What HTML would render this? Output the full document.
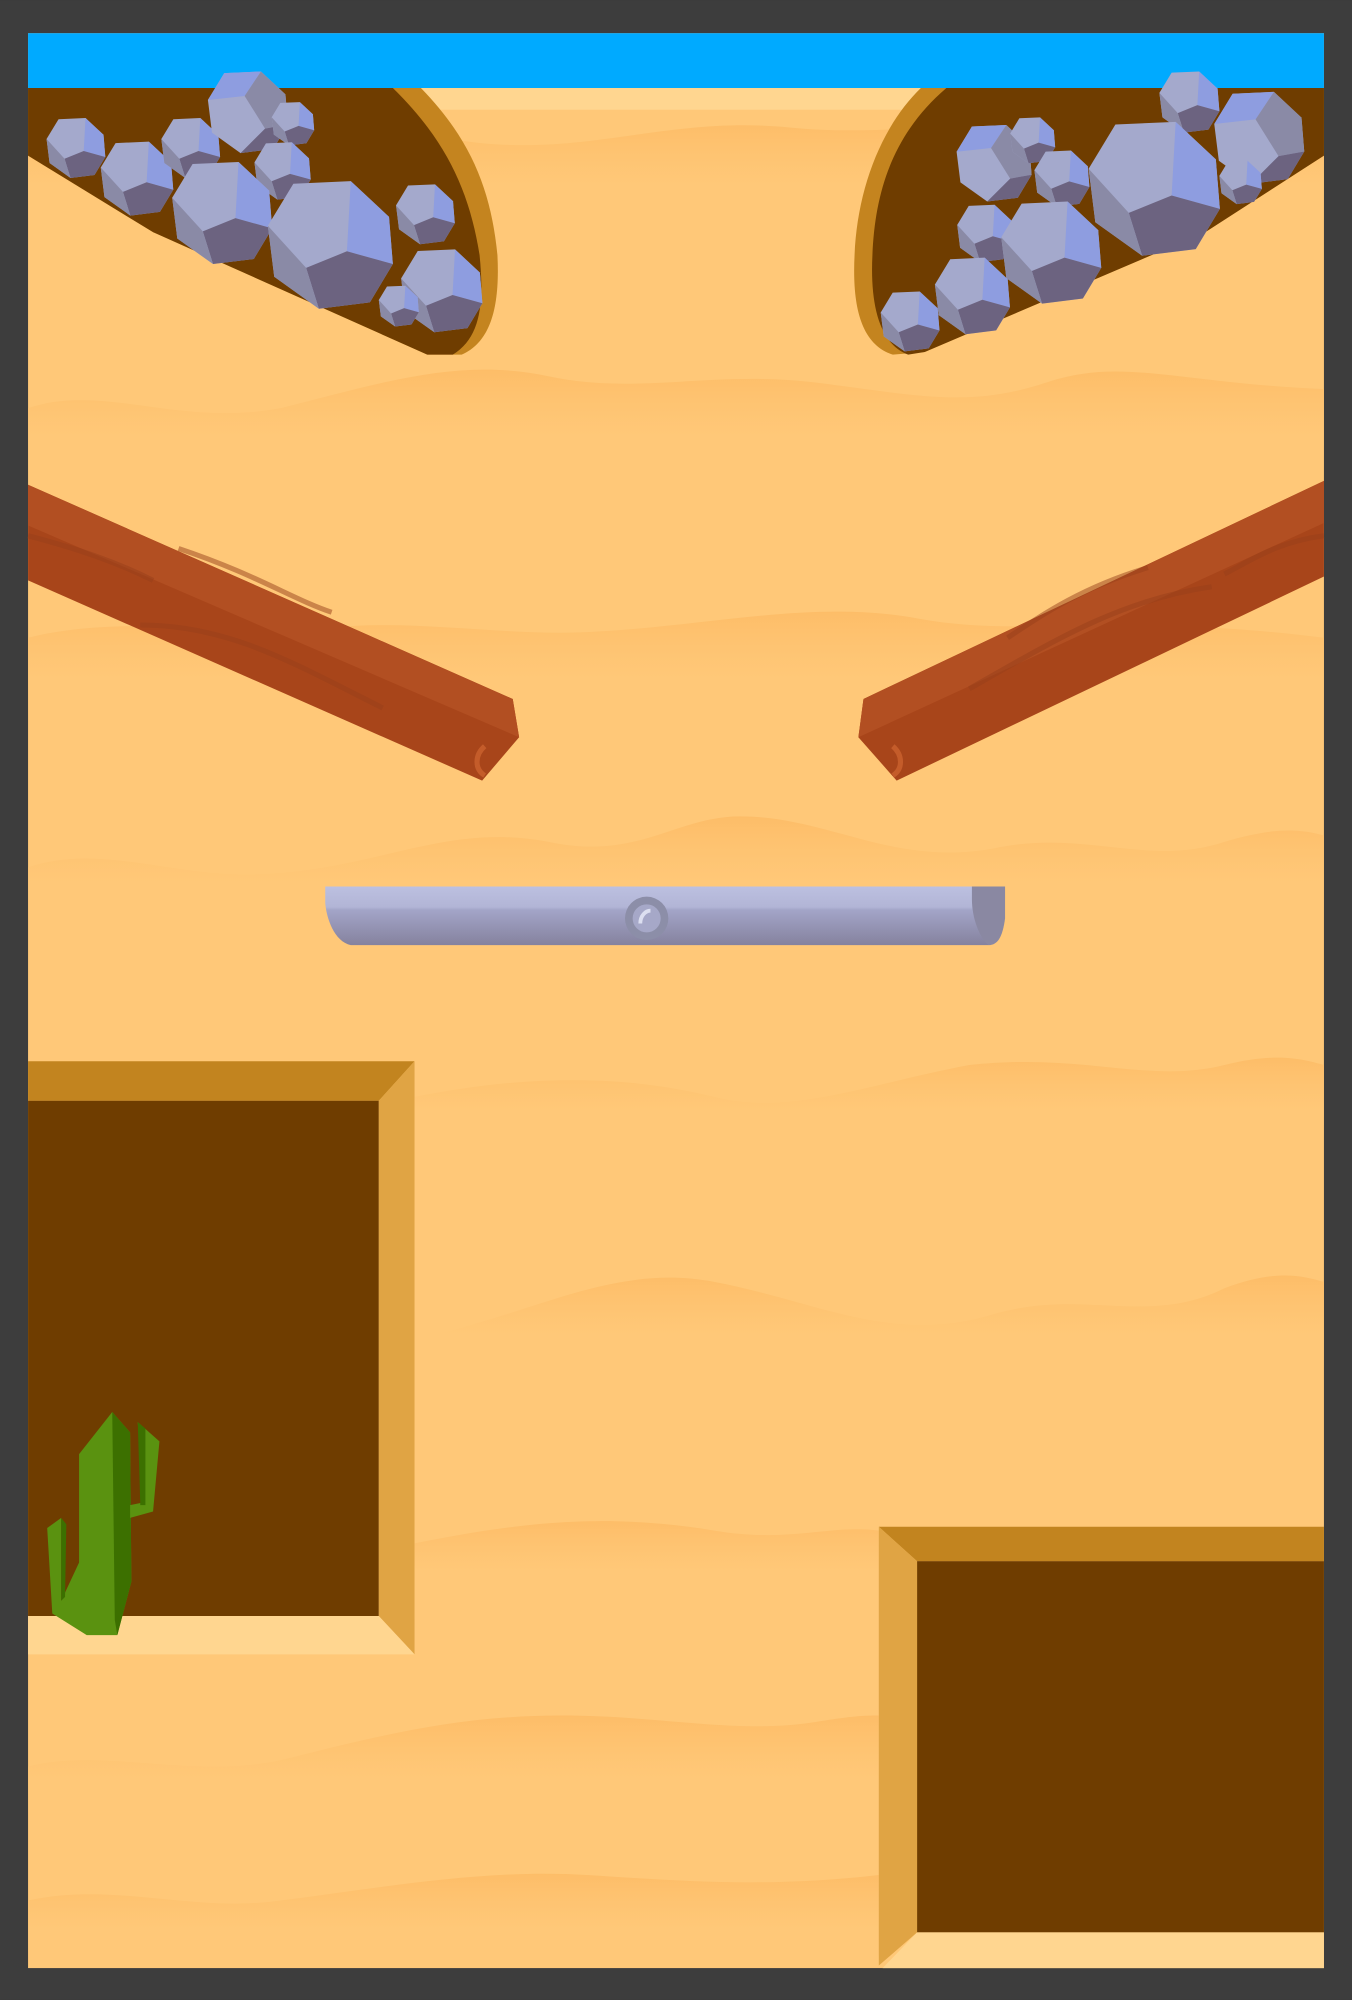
<!DOCTYPE html>
<html><head><meta charset="utf-8"><style>
html,body{margin:0;padding:0;background:#3d3d3d;}
svg{display:block;}
</style></head><body>
<svg width="1352" height="2000" viewBox="0 0 1060 1568" xmlns="http://www.w3.org/2000/svg">
<defs>
<linearGradient id="wv" x1="0" y1="0" x2="0" y2="1">
<stop offset="0" stop-color="#fdbd68"/><stop offset="0.6" stop-color="#ffc878" stop-opacity="0.6"/><stop offset="1" stop-color="#ffc878" stop-opacity="0"/>
</linearGradient>
<linearGradient id="bar" x1="0" y1="0" x2="0" y2="1">
<stop offset="0" stop-color="#bcc0e0"/><stop offset="0.35" stop-color="#b2b5d6"/><stop offset="0.4" stop-color="#a3a5c8"/><stop offset="1" stop-color="#85829e"/>
</linearGradient>
<g id="rk">
<polygon points="-30,-48 15,-50 45,-22 48,15 30,45 -10,50 -45,25 -50,-15" fill="#a4a9cc"/>
<polygon points="15,-50 45,-22 48,15 12,5" fill="#8e9de0"/>
<polygon points="48,15 30,45 -10,50 -20,18 12,5" fill="#6c6380"/>
<polygon points="-50,-15 -20,18 -10,50 -45,25" fill="#8a8aa6"/>
</g>
<g id="rk2">
<polygon points="-30,-48 15,-50 45,-22 48,15 30,45 -10,50 -45,25 -50,-15" fill="#a4a9cc"/>
<polygon points="-30,-48 15,-50 -5,-20 -50,-15" fill="#8e9de0"/>
<polygon points="15,-50 45,-22 48,15 20,20 -5,-20" fill="#8a8aa6"/>
<polygon points="48,15 30,45 -10,50 20,20" fill="#6c6380"/>
</g>
</defs>
<rect x="0" y="0" width="1060" height="1568" fill="#3d3d3d"/>
<rect x="22" y="26" width="1016" height="1517" fill="#ffc878"/>
<g>
<path d="M22,120 C120,90 260,95 360,110 C460,125 520,90 620,100 C720,110 820,80 1038,110 L1038,180 L22,180Z" fill="url(#wv)"/>
<path d="M22,320 C80,300 140,335 220,320 C300,300 360,280 430,295 C500,310 560,290 640,300 C720,310 760,320 820,300 C880,280 920,300 1038,305 L1038,380 L22,380Z" fill="url(#wv)"/>
<path d="M22,500 C100,480 200,500 260,492 C330,485 400,500 470,495 C560,490 640,470 720,485 C800,500 880,480 1038,500 L1038,570 L22,570Z" fill="url(#wv)"/>
<path d="M22,680 C80,660 140,690 210,685 C300,680 350,645 430,660 C500,675 530,640 580,640 C650,640 700,680 780,665 C850,650 900,680 960,660 C1000,648 1020,650 1038,655 L1038,730 L22,730Z" fill="url(#wv)"/>
<path d="M325,860 C400,845 480,840 560,860 C620,875 680,850 760,835 C850,825 900,850 960,835 C1000,825 1020,830 1038,835 L1038,900 L325,900Z" fill="url(#wv)"/>
<path d="M325,1050 C420,1030 480,990 560,1005 C640,1020 700,1055 780,1030 C850,1010 900,1040 960,1010 C1000,995 1020,1000 1038,1005 L1038,1080 L325,1080Z" fill="url(#wv)"/>
<path d="M325,1210 C400,1195 470,1185 560,1200 C620,1210 650,1195 689,1200 L689,1260 L325,1260Z" fill="url(#wv)"/>
<path d="M22,1385 C80,1370 150,1395 220,1380 C300,1360 360,1345 440,1345 C520,1345 580,1360 640,1350 C670,1345 680,1345 689,1345 L689,1430 L22,1430Z" fill="url(#wv)"/>
<path d="M22,1490 C90,1475 150,1500 220,1490 C300,1480 380,1465 460,1470 C540,1475 600,1480 689,1470 L689,1543 L22,1543Z" fill="url(#wv)"/>
</g>
<rect x="22" y="26" width="1016" height="43" fill="#00aaff"/>
<rect x="22" y="69" width="1016" height="17" fill="#ffd690"/>
<path d="M22,69 L330,69 C370,110 385,150 390,200 C392,240 385,268 362,278 L335,278 L120,182 L22,122Z" fill="#c4841f"/>
<path d="M22,69 L308,69 C350,110 368,150 376,200 C380,240 376,265 355,278 L335,278 L120,182 L22,122Z" fill="#6f3d00"/>
<path d="M1038,69 L722,69 C690,100 672,150 670,200 C668,240 675,270 700,278 L725,276 L945,182 L1038,122Z" fill="#c4841f"/>
<path d="M1038,69 L742,69 C700,105 686,150 684,200 C682,240 690,270 712,278 L725,276 L945,182 L1038,122Z" fill="#6f3d00"/>
<use href="#rk" transform="translate(60,116) scale(0.47)"/>
<use href="#rk" transform="translate(108,140) scale(0.58)"/>
<use href="#rk" transform="translate(150,116) scale(0.47)"/>
<use href="#rk2" transform="translate(195,88) scale(0.64)"/>
<use href="#rk" transform="translate(230,97) scale(0.34)"/>
<use href="#rk" transform="translate(222,134) scale(0.45)"/>
<use href="#rk" transform="translate(175,167) scale(0.8)"/>
<use href="#rk" transform="translate(260,192) scale(1.0)"/>
<use href="#rk" transform="translate(334,168) scale(0.47)"/>
<use href="#rk" transform="translate(347,228) scale(0.65)"/>
<use href="#rk" transform="translate(313,240) scale(0.32)"/>
<use href="#rk" transform="translate(933,80) scale(0.48)"/>
<use href="#rk2" transform="translate(988,108) scale(0.72)"/>
<use href="#rk" transform="translate(906,148) scale(1.05)"/>
<use href="#rk" transform="translate(973,143) scale(0.34)"/>
<use href="#rk2" transform="translate(780,128) scale(0.6)"/>
<use href="#rk" transform="translate(810,110) scale(0.36)"/>
<use href="#rk" transform="translate(833,140) scale(0.44)"/>
<use href="#rk" transform="translate(773,183) scale(0.45)"/>
<use href="#rk" transform="translate(825,198) scale(0.8)"/>
<use href="#rk" transform="translate(763,232) scale(0.6)"/>
<use href="#rk" transform="translate(714,252) scale(0.47)"/>
<path d="M22,380 L402,548 L407,578 L378,612 L22,455Z" fill="#a8451a"/>
<path d="M22,380 L402,548 L407,578 L22,412Z" fill="#b24f22"/>
<path d="M22,420 C60,430 90,440 120,455 M110,490 C180,490 230,520 300,555 M140,430 C200,450 230,470 260,480" stroke="#98401a" stroke-width="4" fill="none" opacity="0.5"/>
<path d="M380,585 C372,592 372,603 380,608" stroke="#c45c2a" stroke-width="4" fill="none"/>
<path d="M1038,377 L677,548 L673,578 L703,612 L1038,452Z" fill="#a8451a"/>
<path d="M1038,377 L677,548 L673,578 L1038,410Z" fill="#b24f22"/>
<path d="M1038,420 C1000,425 980,440 960,450 M950,460 C880,470 830,500 760,540 M900,445 C850,460 820,480 790,500" stroke="#98401a" stroke-width="4" fill="none" opacity="0.5"/>
<path d="M700,585 C708,592 708,603 700,608" stroke="#c45c2a" stroke-width="4" fill="none"/>
<path d="M255,695 L778,695 L775,741 L275,741 C262,738 256,720 255,708Z" fill="url(#bar)"/>
<path d="M762,695 L788,695 L788,720 C786,735 782,741 775,741 C768,735 762,720 762,705Z" fill="#8a88a2"/>
<circle cx="507" cy="720" r="17" fill="#8c8ea8"/>
<circle cx="507" cy="720" r="11" fill="#a6a8c8"/>
<path d="M502,724 C502,718 506,714 510,714" stroke="#dcdff0" stroke-width="3" fill="none"/>
<polygon points="22,832 325,832 297,863 22,863" fill="#c2841f"/>
<rect x="22" y="863" width="275" height="404" fill="#6f3d00"/>
<polygon points="297,863 325,832 325,1297 297,1267" fill="#e0a444"/>
<polygon points="22,1267 297,1267 325,1297 22,1297" fill="#ffd690"/>
<polygon points="62,1140 88,1107 102,1123 103,1240 92,1282 68,1282 41,1265 37,1198 48,1190 48,1255 62,1225" fill="#5a9210"/>
<polygon points="88,1107 102,1123 103,1240 92,1282 90,1270" fill="#3c7000"/>
<polygon points="48,1190 52,1195 51,1252 48,1255" fill="#3c7000"/>
<polygon points="108,1115 125,1130 120,1185 102,1190 102,1180 112,1178" fill="#5a9210"/>
<polygon points="108,1115 114,1120 114,1180 110,1180" fill="#3c7000"/>
<polygon points="689,1197 1038,1197 1038,1224 719,1224" fill="#c2841f"/>
<rect x="719" y="1224" width="319" height="291" fill="#6f3d00"/>
<polygon points="689,1197 719,1224 719,1515 689,1541" fill="#e0a444"/>
<polygon points="719,1515 1038,1515 1038,1543 692,1543" fill="#ffd690"/>
</svg>
</body></html>
